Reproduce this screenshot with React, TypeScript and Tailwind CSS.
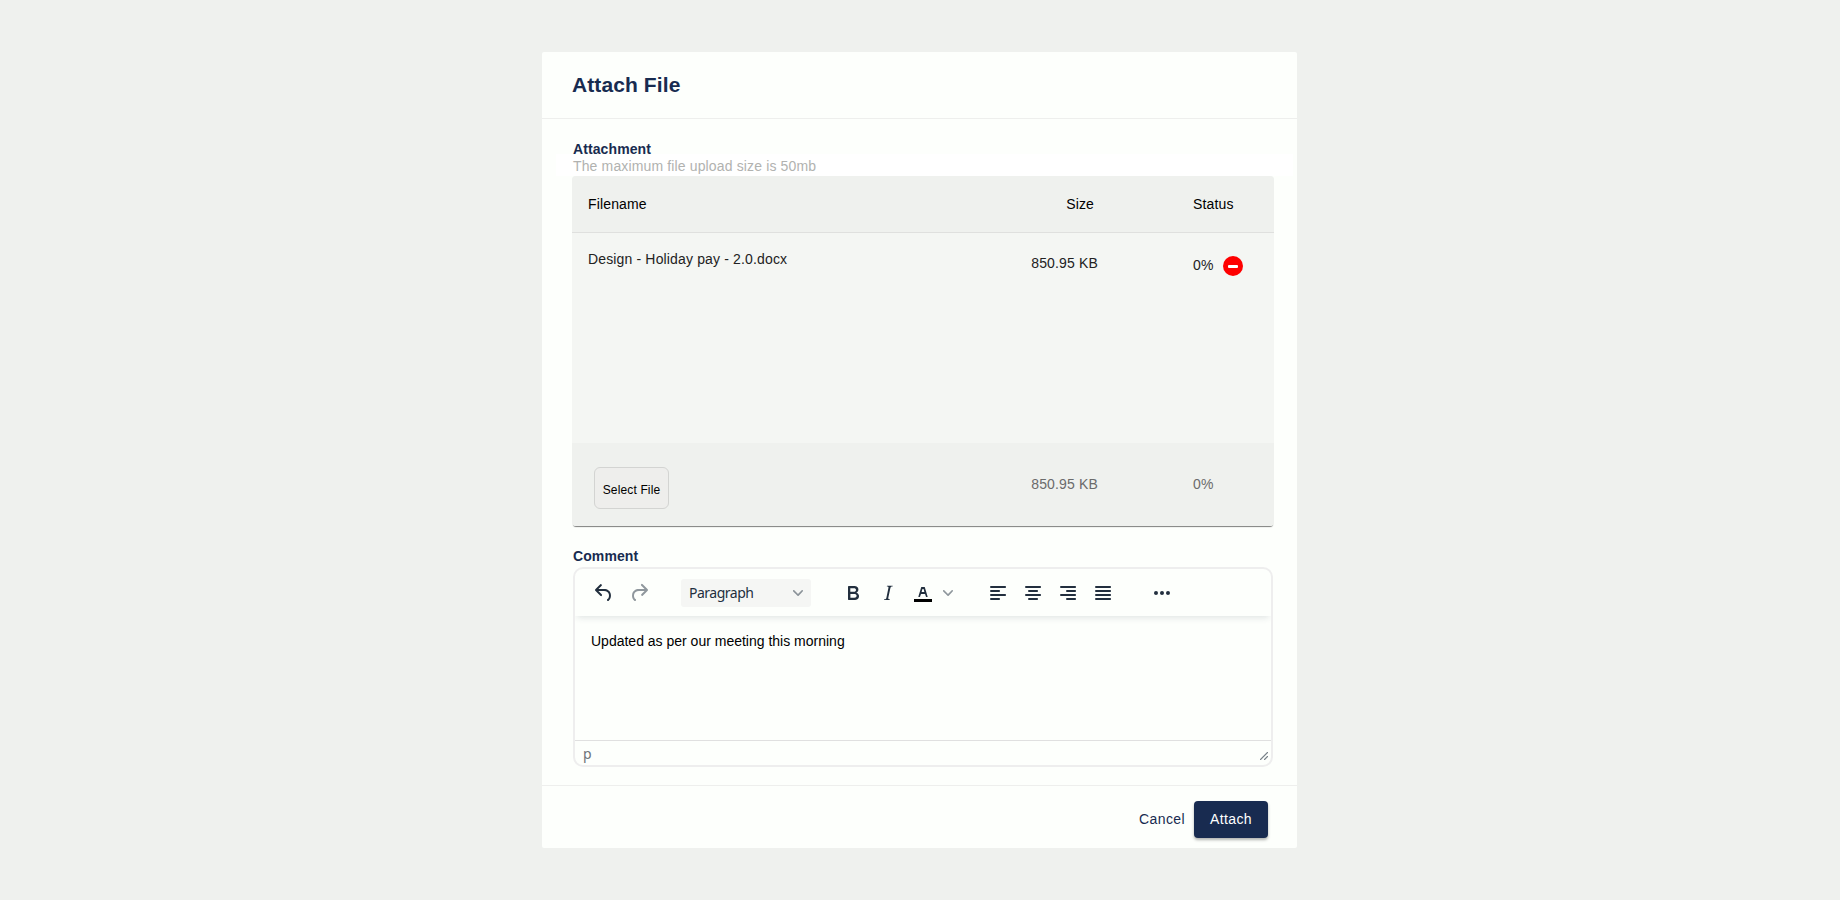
import React from "react";

// tinymce style icons, 24x24 box
const icons = {
  undo: "M6.4 8H12c3.7 0 6.2 2 6.8 5.1.6 2.7-.4 5.6-2.3 6.8a1 1 0 0 1-1-1.8c1.1-.6 1.8-2.7 1.4-4.6-.5-2.1-2.1-3.5-4.9-3.5H6.4l3.3 3.3a1 1 0 1 1-1.4 1.4l-5-5a1 1 0 0 1 0-1.4l5-5a1 1 0 0 1 1.4 1.4L6.4 8Z",
  redo: "M17.6 10H12c-2.8 0-4.4 1.4-4.9 3.5-.4 2 .3 4 1.4 4.6a1 1 0 1 1-1 1.8c-2-1.2-2.9-4.1-2.3-6.8.6-3 3-5.1 6.8-5.1h5.6l-3.3-3.3a1 1 0 1 1 1.4-1.4l5 5a1 1 0 0 1 0 1.4l-5 5a1 1 0 0 1-1.4-1.4l3.3-3.3Z",
  bold: "M7.8 19c-.3 0-.5 0-.6-.2l-.2-.5V5.7c0-.2 0-.4.2-.5l.6-.2h5c1.5 0 2.7.3 3.5 1 .7.6 1.1 1.4 1.1 2.5a3 3 0 0 1-.6 1.9c-.4.6-1 1-1.6 1.2.4.1.9.3 1.3.6s.8.7 1 1.2c.4.4.5 1 .5 1.6 0 1.3-.4 2.3-1.3 3-.8.7-2.1 1-3.8 1H7.8Zm5-8.3c.6 0 1.2-.1 1.6-.5.4-.3.6-.7.6-1.3 0-1.1-.8-1.7-2.3-1.7H9.3v3.5h3.4Zm.5 6c.7 0 1.3-.1 1.7-.4.4-.4.6-.9.6-1.5s-.2-1-.7-1.4c-.4-.3-1-.4-2-.4H9.4v3.8h4Z",
  italic: "M16.7 4.7l-.1.9h-.3c-.6 0-1 0-1.4.3-.3.3-.4.6-.5 1.1l-2.1 9.8v.6c0 .5.4.8 1.4.8h.2l-.2.8H8l.2-.8h.2c1.1 0 1.8-.5 2-1.5l2-9.8.1-.5c0-.6-.4-.8-1.4-.8h-.3l.2-.9h5.8Z",
  alignLeft: "M5 5h14c.6 0 1 .4 1 1s-.4 1-1 1H5a1 1 0 1 1 0-2Zm0 4h8c.6 0 1 .4 1 1s-.4 1-1 1H5a1 1 0 1 1 0-2Zm0 8h8c.6 0 1 .4 1 1s-.4 1-1 1H5a1 1 0 0 1 0-2Zm0-4h14c.6 0 1 .4 1 1s-.4 1-1 1H5a1 1 0 0 1 0-2Z",
  alignCenter: "M5 5h14c.6 0 1 .4 1 1s-.4 1-1 1H5a1 1 0 1 1 0-2Zm3 4h8c.6 0 1 .4 1 1s-.4 1-1 1H8a1 1 0 1 1 0-2Zm0 8h8c.6 0 1 .4 1 1s-.4 1-1 1H8a1 1 0 0 1 0-2Zm-3-4h14c.6 0 1 .4 1 1s-.4 1-1 1H5a1 1 0 0 1 0-2Z",
  alignRight: "M5 5h14c.6 0 1 .4 1 1s-.4 1-1 1H5a1 1 0 1 1 0-2Zm6 4h8c.6 0 1 .4 1 1s-.4 1-1 1h-8a1 1 0 0 1 0-2Zm0 8h8c.6 0 1 .4 1 1s-.4 1-1 1h-8a1 1 0 0 1 0-2Zm-6-4h14c.6 0 1 .4 1 1s-.4 1-1 1H5a1 1 0 0 1 0-2Z",
  justify: "M5 5h14c.6 0 1 .4 1 1s-.4 1-1 1H5a1 1 0 1 1 0-2Zm0 4h14c.6 0 1 .4 1 1s-.4 1-1 1H5a1 1 0 1 1 0-2Zm0 4h14c.6 0 1 .4 1 1s-.4 1-1 1H5a1 1 0 0 1 0-2Zm0 4h14c.6 0 1 .4 1 1s-.4 1-1 1H5a1 1 0 0 1 0-2Z",
  more: "M6 10a2 2 0 0 0-2 2c0 1.1.9 2 2 2a2 2 0 0 0 2-2 2 2 0 0 0-2-2Zm12 0a2 2 0 0 0-2 2c0 1.1.9 2 2 2a2 2 0 0 0 2-2 2 2 0 0 0-2-2Zm-6 0a2 2 0 0 0-2 2c0 1.1.9 2 2 2a2 2 0 0 0 2-2 2 2 0 0 0-2-2Z",
};

const ToolIcon = ({ d, className }: { d: string; className?: string }) => (
  <span className={`flex h-[28px] w-[35px] items-center justify-center ${className ?? ""}`}>
    <svg width="24" height="24" viewBox="0 0 24 24" fill="currentColor">
      <path d={d} />
    </svg>
  </span>
);

const Chevron = ({ className }: { className?: string }) => (
  <svg width="10" height="10" viewBox="0 0 10 10" fill="currentColor" className={className}>
    <path d="M8.7 2.2c.3-.3.8-.3 1 0 .4.4.4.9 0 1.2L5.7 7.8c-.3.3-.9.3-1.2 0L.2 3.4a.8.8 0 0 1 0-1.2c.3-.3.8-.3 1.1 0L5 6l3.7-3.8Z" />
  </svg>
);

const Toolbar = () => (
  <div className="relative z-10 flex h-[47px] items-center pl-[11px] text-[#222f3e] shadow-[0_4px_6px_-2px_rgba(34,47,62,0.12)]">
    <ToolIcon d={icons.undo} />
    <ToolIcon d={icons.redo} className="text-[#222f3e]/50" />
    <div className="ml-[25px] flex h-[28px] w-[130px] items-center justify-between rounded-[3px] bg-[#f5f6f4] pl-[8px] pr-[8px] font-['Noto_Sans',sans-serif] text-[14px] tracking-[-0.5px]">
      <span>Paragraph</span>
      <Chevron className="text-[#222f3e]/50" />
    </div>
    <ToolIcon d={icons.bold} className="ml-[24px]" />
    <ToolIcon d={icons.italic} />
    <span className="flex h-[28px] w-[35px] items-center justify-center">
      <svg width="24" height="24" viewBox="0 0 24 24" fill="currentColor">
        <path d="M3 18h18v3H3z" fill="#000" />
        <path d="M8.7 16h-.8a.5.5 0 0 1-.5-.6l2.7-9c.1-.3.3-.4.5-.4h2.8c.2 0 .4.1.5.4l2.7 9a.5.5 0 0 1-.5.6h-.8a.5.5 0 0 1-.4-.4l-.7-2.2c0-.3-.3-.4-.5-.4h-3.4c-.2 0-.4.1-.5.4l-.7 2.2c0 .3-.2.4-.4.4Zm2.6-7.6-.6 2a.5.5 0 0 0 .5.6h1.6a.5.5 0 0 0 .5-.6l-.6-2c0-.3-.3-.4-.5-.4h-.4c-.2 0-.4.1-.5.4Z" />
      </svg>
    </span>
    <span className="flex w-[15px] items-center justify-center">
      <Chevron className="text-[#222f3e]/50" />
    </span>
    <ToolIcon d={icons.alignLeft} className="ml-[25px]" />
    <ToolIcon d={icons.alignCenter} />
    <ToolIcon d={icons.alignRight} />
    <ToolIcon d={icons.justify} />
    <ToolIcon d={icons.more} className="ml-[24px]" />
  </div>
);

const Editor = () => (
  <div className="flex h-[200px] flex-col overflow-hidden rounded-[10px] border-2 border-[#eeeeee] bg-[#fdfffc]">
    <Toolbar />
    <div className="flex-1 pl-[16px] pt-[15px] text-[14px] leading-[20px] text-black">
      Updated as per our meeting this morning
    </div>
    <div className="flex h-[25px] items-center justify-between border-t border-[#e0e0e0] pl-[8px] pr-[2px] font-['Noto_Sans',sans-serif] text-[14px] text-[#6d7379]">
      <span>p</span>
      <svg width="10" height="10" viewBox="0 0 10 10" className="mt-[6px] text-[#222f3e]/60" fill="currentColor">
        <path d="M8.1 1.1A.5.5 0 1 1 8.9 1.9L1.9 8.9A.5.5 0 1 1 1.1 8.1L8.1 1.1ZM8.1 5.1A.5.5 0 1 1 8.9 5.9L5.9 8.9A.5.5 0 1 1 5.1 8.1L8.1 5.1Z" />
      </svg>
    </div>
  </div>
);

const FileTable = () => (
  <div className="overflow-hidden rounded-[4px] bg-[#f4f6f3] text-[14px] tracking-[0.15px] shadow-[0_2px_1px_-1px_rgba(0,0,0,0.5)]">
    <div className="flex h-[57px] items-center border-b border-[#dfe0de] bg-[#eff1ee] text-black">
      <span className="flex-1 pl-[16px]">Filename</span>
      <span className="w-[100px] text-right">Size</span>
      <span className="w-[180px] pl-[99px]">Status</span>
    </div>
    <div className="flex h-[210px] items-start text-[#222222]">
      <span className="flex-1 pl-[16px] pt-[16px] leading-[20px]">Design - Holiday pay - 2.0.docx</span>
      <span className="w-[104px] pt-[20px] text-right leading-[20px]">850.95 KB</span>
      <div className="flex w-[176px] items-center pl-[95px] pt-[21px]">
        <span className="leading-[20px]">0%</span>
        <span className="ml-[9px] mt-[2px] flex h-[20px] w-[20px] items-center justify-center rounded-full bg-[#fe0000]">
          <span className="h-[3px] w-[10px] rounded-[1px] bg-white" />
        </span>
      </div>
    </div>
    <div className="flex h-[83px] items-start bg-[#eff1ee] text-[#6b6b6b]">
      <div className="flex-1 pl-[22px] pt-[24px]">
        <button className="h-[42px] w-[75px] rounded-[6px] border border-[#d3d4d2] bg-[#eeeeec] pt-[3px] text-[12px] text-black">
          Select File
        </button>
      </div>
      <span className="w-[104px] pt-[31px] text-right leading-[20px]">850.95 KB</span>
      <span className="w-[176px] pl-[95px] pt-[31px] leading-[20px]">0%</span>
    </div>
  </div>
);

export default function App() {
  return (
    <div className="h-[900px] overflow-hidden bg-[#eff1ee] pt-[52px] font-['Liberation_Sans',Arial,sans-serif]">
      <div className="ml-[542px] w-[755px] rounded-[2px] bg-[#fdfffc] text-[#182b50]">
        <div className="flex h-[67px] items-center border-b border-[#eeefed] pl-[30px]">
          <h1 className="text-[21px] font-bold tracking-[0.1px]">Attach File</h1>
        </div>

        <div className="pl-[30px] pr-[23px] pt-[22px]">
          <div className="relative z-10 pl-[1px] text-[14px] font-bold leading-[16px] tracking-[0.1px]">Attachment</div>
          <div className="-ml-[16px] -mr-[19px] -mt-[3px] flex h-[22px] items-end bg-white pl-[17px] text-[14px] leading-[20px] tracking-[0.14px] text-[#b1b2b0]">
            The maximum file upload size is 50mb
          </div>
          <FileTable />
          <div className="mt-[22px] pl-[1px] text-[14px] font-bold leading-[16px] tracking-[0.1px]">Comment</div>
          <div className="mt-[3px] px-[1px]">
            <Editor />
          </div>
        </div>

        <div className="mt-[18px] flex h-[63px] items-start justify-end gap-[9px] border-t border-[#eeefed] pr-[29px] pt-[15px]">
          <button className="h-[37px] text-[14px] tracking-[0.4px]">Cancel</button>
          <button className="h-[37px] w-[74px] rounded-[4px] bg-[#182b50] text-[14px] tracking-[0.4px] text-white shadow-[0_2px_3px_rgba(0,0,0,0.3)]">
            Attach
          </button>
        </div>
      </div>
    </div>
  );
}
